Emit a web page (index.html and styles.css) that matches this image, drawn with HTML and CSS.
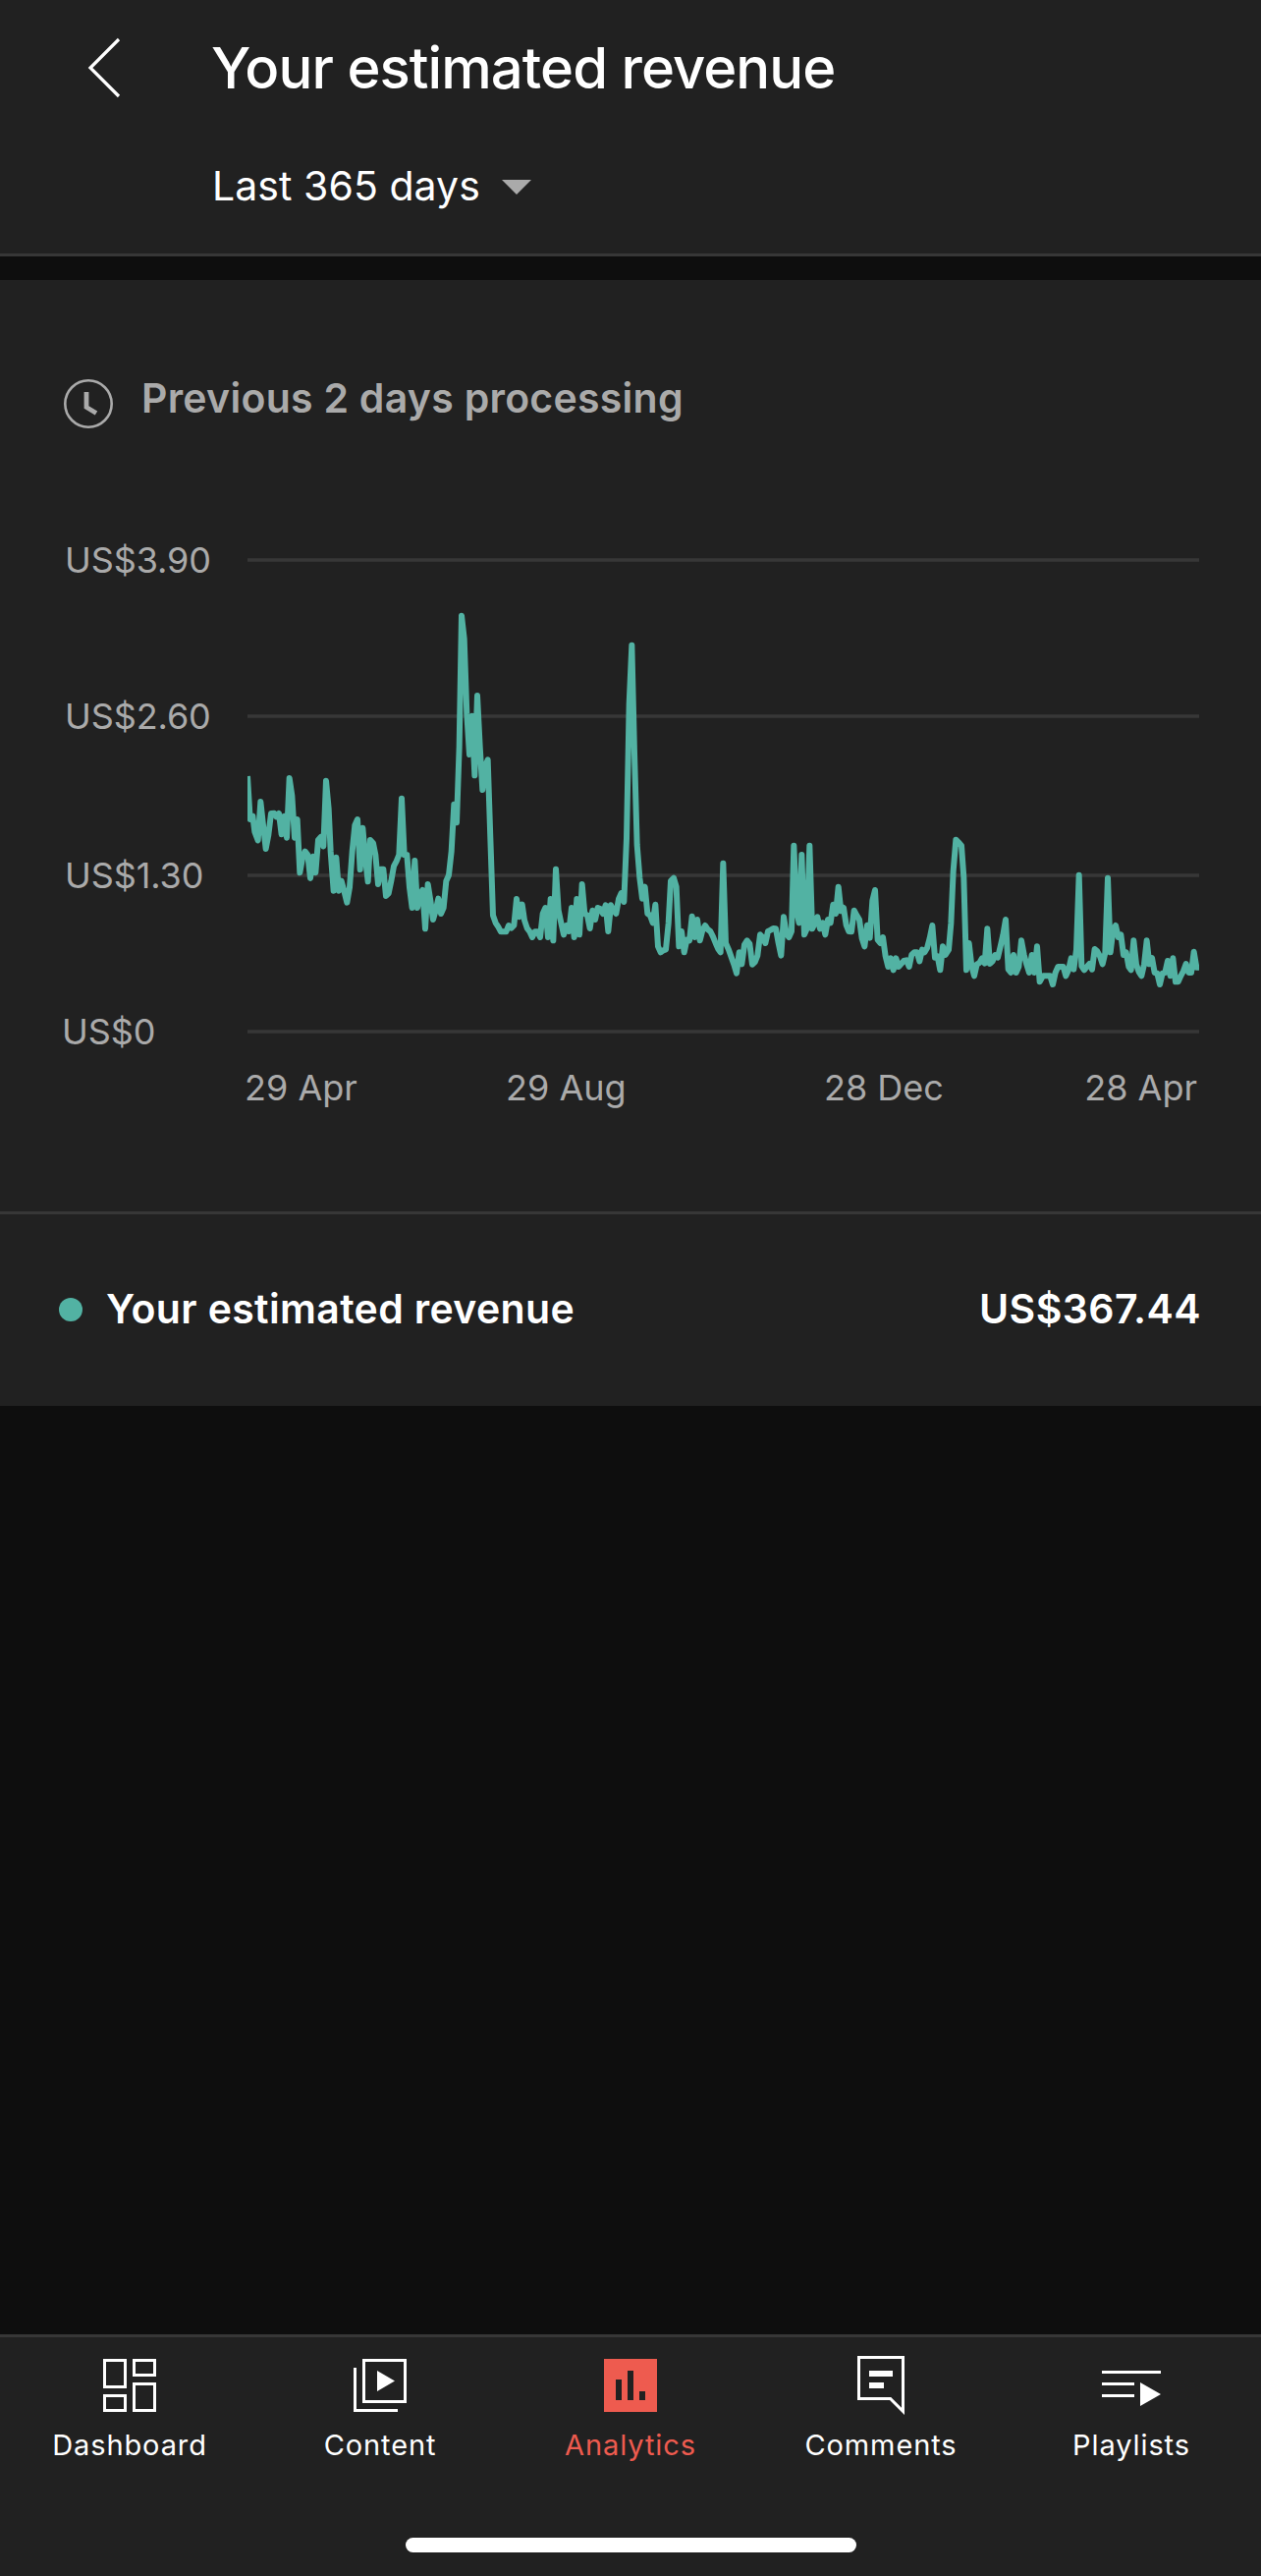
FILE: index.html
```html
<!DOCTYPE html>
<html lang="en">
  <head>
    <meta charset="UTF-8">
    <meta name="viewport" content="width=device-width, initial-scale=1.0">
    <title>Your estimated revenue</title>
    <link rel="stylesheet" href="styles.css">
  </head>
  <body>
    <!-- Header -->
    <header class="header">
      <div class="title-row">
        <svg class="back-icon" width="36" height="64" viewBox="0 0 36 64">
          <path d="M33 3L4 32L33 61" fill="none" stroke="#fff" stroke-width="3.2"/>
        </svg>
        <h1>Your estimated revenue</h1>
      </div>
      <div class="period">
        <span class="period-text">Last 365 days</span>
        <span class="caret"></span>
      </div>
    </header>

    <!-- Revenue Card -->
    <main class="card">
      <div class="notice">
        <svg class="clock-icon" width="50" height="50" viewBox="0 0 50 50" fill="none" stroke="#aaa">
          <circle cx="25" cy="25" r="23.7" stroke-width="2.6"/>
          <path d="M23 13V28.5L33 34.5" stroke-width="4.8"/>
        </svg>
        <span class="notice-text">Previous 2 days processing</span>
      </div>

      <div class="chart">
        <div class="y-axis">
          <span>US$3.90</span>
          <span>US$2.60</span>
          <span>US$1.30</span>
          <span class="zero">US$0</span>
        </div>
        <svg class="plot" width="969" height="487" viewBox="36 21 2907 1461">
          <path class="grid-line" d="M36 30H2943M36 507H2943M36 993H2943M36 1470H2943"/>
          <polyline class="revenue-line" points="
            36,690 44,822 52,812 58,860 68,886 76,768 84,840 92,912 100,870 108,804 118,803 124,814 132,804 140,868 148,812 156,878
            164,696 172,750 180,878 188,822 196,985 204,940 212,920 220,930 228,1002 236,935 244,985 252,885 260,876 268,904
            276,704 284,790 290,920 299,1040 307,938 315,1040 323,1010 331,1040 340,1076 348,1030 356,920 364,840 372,822 380,975
            388,848 396,940 404,1012 411,885 420,895 427,930 435,1020 443,974 451,974 459,1056 467,1048 475,1010 483,965 491,950
            499,930 507,758 515,930 523,930 531,1030 539,1092 547,948 555,1092 563,1050 571,1038 579,1156 587,1020 595,1070
            603,1128 611,1100 619,1064 627,1110 635,1092 643,1010 651,992 659,920 667,776 675,832 683,600 690,200 698,270 706,500
            714,624 722,506 730,688 738,444 746,600 754,732 762,660 770,640 778,880 786,1115 794,1138 802,1150 810,1165 826,1165
            834,1146 842,1154 850,1146 858,1065 866,1120 875,1082 882,1130 890,1154 898,1165 906,1182 914,1165 922,1165 930,1182
            938,1110 946,1092 954,1182 962,1065 970,1192 978,974 986,1100 994,1138 1002,1174 1010,1146 1018,1164 1026,1092
            1034,1182 1042,1065 1050,1174 1058,1020 1066,1110 1074,1115 1082,1155 1090,1100 1098,1128 1106,1092 1114,1095
            1122,1110 1130,1084 1138,1164 1146,1084 1154,1100 1162,1110 1170,1065 1178,1047 1186,1074 1194,880 1202,470 1210,290
            1218,620 1226,900 1234,1000 1242,1064 1250,1028 1258,1110 1266,1115 1274,1138 1282,1082 1290,1210 1298,1228
            1306,1222 1314,1219 1322,1140 1329,1010 1338,1001 1346,1028 1354,1210 1362,1164 1370,1228 1378,1190 1386,1192
            1394,1118 1402,1182 1410,1128 1418,1192 1426,1160 1434,1146 1442,1158 1450,1164 1458,1180 1466,1200 1474,1218
            1481,1228 1489,956 1497,1200 1506,1220 1522,1265 1530,1292 1538,1228 1546,1264 1554,1205 1562,1192 1570,1202
            1578,1265 1586,1258 1594,1238 1602,1174 1610,1182 1618,1200 1626,1164 1634,1160 1642,1155 1650,1156 1658,1200
            1666,1238 1674,1120 1682,1170 1690,1182 1698,1164 1705,902 1713,1100 1721,1138 1729,930 1737,1174 1745,1156
            1753,902 1761,1156 1769,1140 1777,1120 1785,1156 1793,1138 1801,1174 1809,1128 1817,1138 1825,1082 1833,1110
            1841,1028 1849,1102 1857,1092 1865,1145 1873,1164 1881,1165 1889,1100 1897,1115 1905,1128 1913,1185 1921,1210
            1929,1145 1937,1184 1945,1070 1953,1038 1961,1190 1969,1200 1977,1182 1985,1240 1993,1272 2001,1246 2009,1282
            2017,1246 2025,1272 2041,1254 2049,1252 2057,1272 2065,1235 2073,1228 2081,1228 2089,1255 2097,1220 2104,1228
            2112,1215 2120,1185 2128,1146 2136,1244 2144,1240 2152,1282 2160,1210 2168,1236 2178,1220 2185,1140 2192,980
            2200,884 2208,892 2217,902 2224,1000 2232,1282 2240,1200 2248,1270 2256,1300 2264,1265 2272,1260 2280,1246
            2288,1262 2296,1156 2304,1263 2312,1255 2320,1236 2328,1244 2336,1210 2344,1175 2352,1128 2360,1280 2368,1290
            2376,1236 2384,1290 2392,1272 2400,1192 2408,1235 2416,1265 2424,1290 2432,1236 2440,1290 2448,1210 2456,1318
            2466,1300 2488,1300 2496,1326 2504,1290 2512,1272 2528,1272 2536,1300 2544,1282 2552,1246 2560,1280 2568,1220
            2576,992 2584,1270 2592,1282 2600,1272 2608,1263 2616,1280 2624,1218 2632,1225 2640,1240 2648,1264 2656,1230
            2664,1001 2672,1228 2680,1160 2688,1146 2696,1182 2704,1174 2712,1236 2720,1228 2728,1272 2735,1282 2743,1192
            2751,1265 2759,1288 2767,1300 2775,1265 2783,1192 2791,1264 2799,1245 2807,1290 2815,1292 2823,1326 2831,1292
            2839,1290 2847,1254 2855,1300 2863,1246 2871,1318 2879,1318 2887,1300 2895,1285 2903,1263 2911,1290 2919,1290
            2927,1226 2935,1274 2943,1274"/>
        </svg>
      </div>
      <div class="x-axis">
        <span>29 Apr</span>
        <span>29 Aug</span>
        <span>28 Dec</span>
        <span>28 Apr</span>
      </div>

      <div class="total">
        <span class="dot"></span>
        <span class="total-label">Your estimated revenue</span>
        <span class="total-value">US$367.44</span>
      </div>
    </main>

    <!-- Bottom Navigation -->
    <nav class="bottom-nav">
      <div class="tabs">
        <a class="tab">
          <svg viewBox="0 0 24 24" fill="none" stroke="currentColor">
            <path d="M3.5 3.5h7v9h-7zM13.5 3.5h7v5h-7zM3.5 15.5h7v5h-7zM13.5 11.5h7v9h-7z"/>
          </svg>
          <span>Dashboard</span>
        </a>
        <a class="tab">
          <svg viewBox="0 0 24 24" fill="none" stroke="currentColor">
            <path d="M6.5 3.5h14v14h-14zM3.5 6v14.5H18"/>
            <path d="M11 7v7l6-3.5z" fill="currentColor" stroke="none"/>
          </svg>
          <span>Content</span>
        </a>
        <a class="tab active">
          <svg viewBox="0 0 24 24" fill="currentColor">
            <path fill-rule="evenodd" d="M3 3h18v18H3zM7 10v7h2v-7zM11 7v10h2V7zM15 14v3h2v-3z"/>
          </svg>
          <span>Analytics</span>
        </a>
        <a class="tab">
          <svg viewBox="0 0 24 24" fill="currentColor">
            <path fill-rule="evenodd" d="M4 2h16v20l-5-5H4zM5 3v13h10.4l3.6 3.6V3z"/>
            <path d="M8 7h8v2H8zM8 11h5v2H8z"/>
          </svg>
          <span>Comments</span>
        </a>
        <a class="tab">
          <svg viewBox="0 0 24 24" fill="currentColor">
            <path d="M2 7h20v1H2zM2 11h11v1H2zM2 15h11v1H2zM15 11v8l7-4z"/>
          </svg>
          <span>Playlists</span>
        </a>
      </div>
      <div class="home-indicator"></div>
    </nav>
  </body>
</html>
```

FILE: styles.css
```css
/* General Styling */
* {
  box-sizing: border-box;
}

body {
  margin: 0;
  height: 2622px;
  display: flex;
  flex-direction: column;
  background-color: #0e0e0e;
  color: #fff;
  font-family: Inter, "Liberation Sans", sans-serif;
  white-space: nowrap;
}

/* Header */
.header {
  height: 261px;
  background-color: #212121;
  border-bottom: 3px solid #373737;
}

.title-row {
  display: flex;
  align-items: center;
  height: 138px;
  padding-left: 88px;
}

.back-icon {
  margin-right: 91px;
}

h1 {
  margin: 0;
  font-size: 58px;
  font-weight: 500;
  line-height: 70px;
  letter-spacing: -0.95px;
}

.period {
  display: flex;
  align-items: center;
  height: 102px;
  padding-left: 216px;
}

.period-text {
  font-size: 41px;
  letter-spacing: 0.05px;
}

.caret {
  margin: 2px 0 0 22px;
  border-left: 15px solid transparent;
  border-right: 15px solid transparent;
  border-top: 15px solid #aaa;
}

/* Revenue Card */
.card {
  height: 1146px;
  margin-top: 24px;
  background-color: #212121;
}

.notice {
  display: flex;
  align-items: flex-start;
  height: 261px;
  padding: 101px 0 0 65px;
  color: #aaa;
}

.notice-text {
  margin-left: 29px;
  font-size: 41px;
  font-weight: 600;
  line-height: 38px;
  letter-spacing: 0.27px;
}

/* Chart */
.chart {
  display: flex;
  align-items: flex-start;
  padding-left: 66px;
  color: #aaa;
}

.y-axis {
  display: grid;
  grid-template-rows: 159px 162px 159px 48px;
  width: 186px;
  font-size: 36px;
  line-height: 48px;
  letter-spacing: -0.1px;
}

.y-axis .zero {
  margin-left: -3px;
}

.plot {
  margin-top: 21px;
}

.grid-line {
  stroke: #373737;
  stroke-width: 10;
}

.revenue-line {
  fill: none;
  stroke: #52b2a3;
  stroke-width: 18;
  stroke-linejoin: round;
}

.x-axis {
  display: grid;
  grid-template-columns: 266px 324px 1fr auto;
  height: 159px;
  padding: 9px 65px 0 249px;
  color: #aaa;
  font-size: 36px;
  line-height: 48px;
}

/* Total Row */
.total {
  display: flex;
  align-items: center;
  height: 198px;
  padding: 0 61px 3px 60px;
  border-top: 3px solid #373737;
  font-size: 41px;
  font-weight: 600;
}

.dot {
  width: 24px;
  height: 24px;
  margin: 2px 24px 0 0;
  border-radius: 50%;
  background-color: #52b2a3;
}

.total-label {
  letter-spacing: 0.35px;
}

.total-value {
  margin-left: auto;
  letter-spacing: 0.45px;
}

/* Bottom Navigation */
.bottom-nav {
  height: 246px;
  margin-top: auto;
  padding: 13px 4.5px 0;
  background-color: #212121;
  border-top: 3px solid #373737;
}

.tabs {
  display: flex;
  height: 191px;
}

.tab {
  display: flex;
  flex-direction: column;
  align-items: center;
  width: 255px;
  font-size: 29px;
  line-height: 36px;
  letter-spacing: 0.9px;
}

.tab svg {
  width: 72px;
  height: 72px;
  margin-bottom: 7px;
}

.tab.active {
  color: #ee5b4f;
}

.home-indicator {
  width: 459px;
  height: 15px;
  margin: 0 auto;
  border-radius: 8px;
  background-color: #fff;
}
```
